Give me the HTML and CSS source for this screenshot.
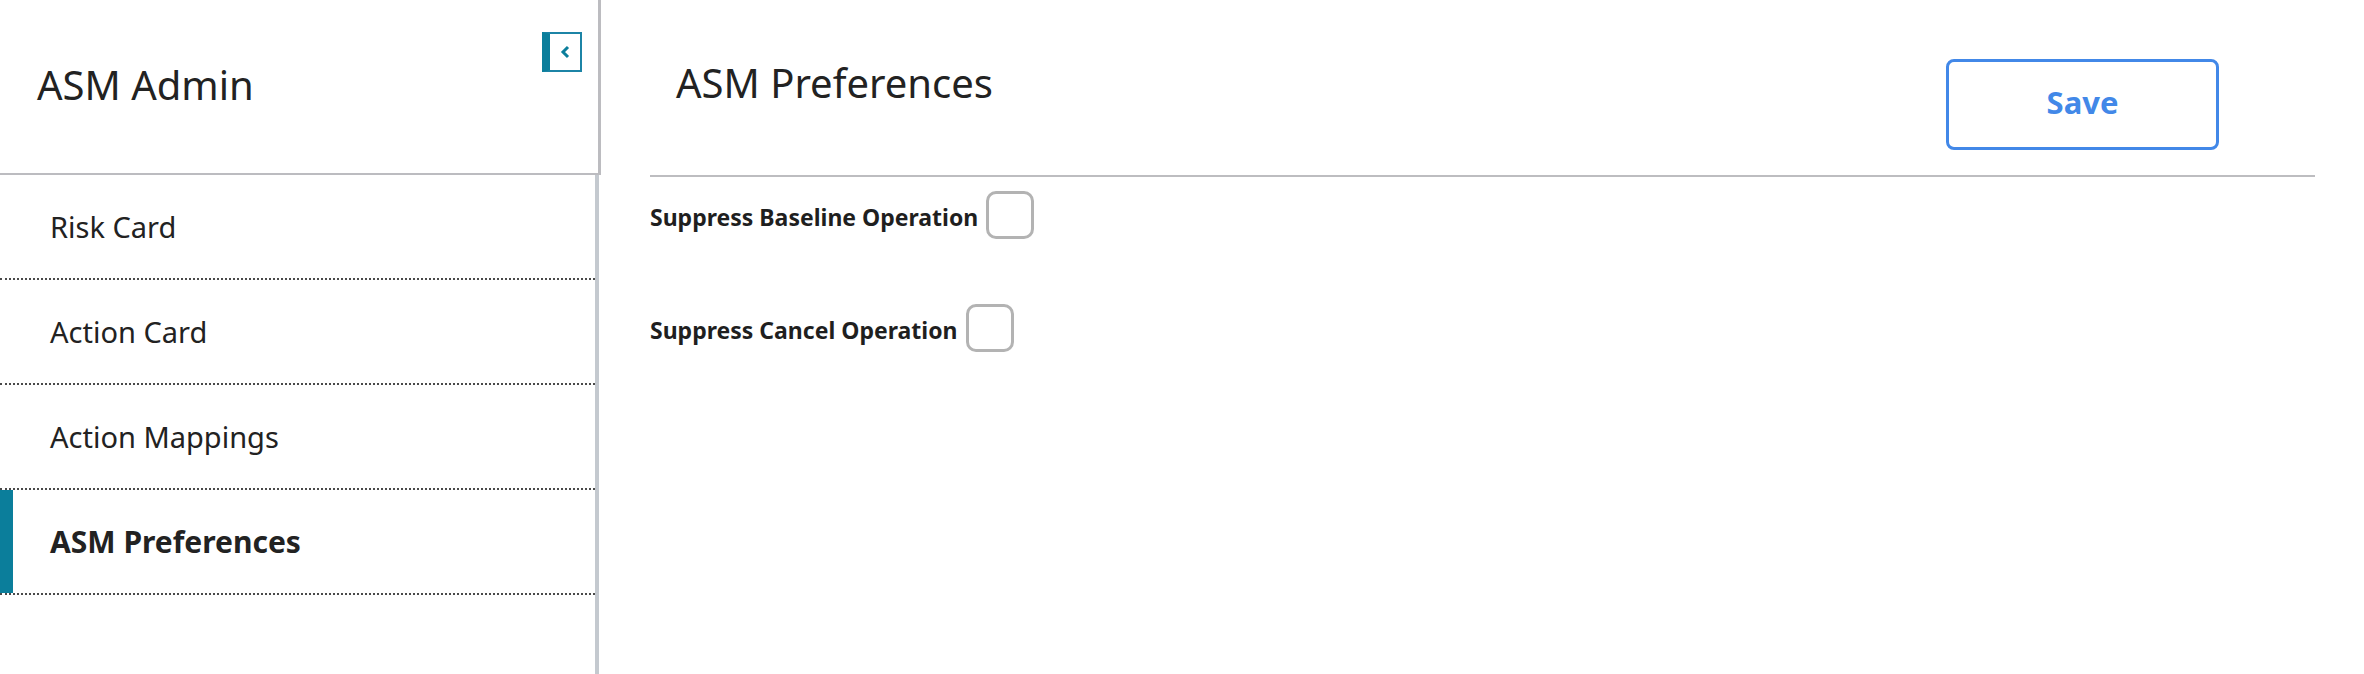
FILE: index.html
```html
<!DOCTYPE html>
<html lang="en">
<head>
<meta charset="utf-8">
<title>ASM Admin</title>
<link rel="stylesheet" href="styles.css">
</head>
<body>
<div class="app">
  <aside class="sidebar">
    <div class="sidebar-header">
      <h1 class="sidebar-title">ASM Admin</h1>
      <button class="collapse-btn" aria-label="Collapse">
        <svg width="11" height="14" viewBox="0 0 11 14"><path d="M8 2 L3 7 L8 12" fill="none" stroke="#0b7e9b" stroke-width="3"/></svg>
      </button>
    </div>
    <nav class="menu">
      <div class="menu-item">Risk Card</div>
      <div class="menu-item">Action Card</div>
      <div class="menu-item">Action Mappings</div>
      <div class="menu-item active">ASM Preferences</div>
    </nav>
  </aside>
  <main class="content">
    <div class="content-header">
      <h2 class="content-title">ASM Preferences</h2>
      <button class="save-btn">Save</button>
    </div>
    <div class="options">
      <label class="option">
        <span class="option-label">Suppress Baseline Operation</span>
        <input type="checkbox" class="checkbox">
      </label>
      <label class="option">
        <span class="option-label">Suppress Cancel Operation</span>
        <input type="checkbox" class="checkbox">
      </label>
    </div>
  </main>
</div>
</body>
</html>
```

FILE: styles.css
```css
html, body {
  margin: 0;
  padding: 0;
  background: #ffffff;
}

body {
  font-family: "Noto Sans", "Open Sans", sans-serif;
  color: #222222;
}

.app {
  display: flex;
  height: 674px;
  overflow: hidden;
}

.sidebar {
  width: 601px;
  flex: none;
  display: flex;
  flex-direction: column;
}

.sidebar-header {
  width: 601px;
  height: 175px;
  box-sizing: border-box;
  display: flex;
  justify-content: space-between;
  align-items: flex-start;
  padding: 32px 16px 0 37px;
  border-bottom: 2px solid #bcbcc0;
  border-right: 3px solid #bcbcc0;
}

.sidebar-title {
  margin: 33px 0 0 0;
  font-size: 40px;
  font-weight: 400;
  line-height: 1;
  color: #222222;
}

.collapse-btn {
  width: 40px;
  height: 40px;
  box-sizing: border-box;
  margin: 0;
  padding: 0 0 0 1px;
  background: #ffffff;
  border: 2px solid #1c84a6;
  border-left: 8px solid #0b7e9b;
  display: flex;
  align-items: center;
  justify-content: center;
  cursor: pointer;
}

.menu {
  flex: 1;
  width: 599px;
  box-sizing: border-box;
  border-right: 4px solid #c4c9cf;
}

.menu-item {
  height: 105px;
  box-sizing: border-box;
  line-height: 103px;
  padding-left: 50px;
  font-size: 29px;
  color: #222222;
  border-bottom: 2px dotted #4a4a4a;
}

.menu-item.active {
  font-weight: 700;
  font-size: 30px;
  box-shadow: inset 13px 0 0 #0b7e9b;
}

.content {
  flex: 1;
  padding: 0 49px;
  min-width: 0;
}

.content-header {
  display: flex;
  justify-content: space-between;
  align-items: flex-start;
  padding: 59px 96px 25px 26px;
  border-bottom: 2px solid #bdbdc0;
}

.content-title {
  margin: 4px 0 0 0;
  font-size: 40px;
  font-weight: 400;
  line-height: 1;
  color: #222222;
}

.save-btn {
  width: 273px;
  height: 91px;
  box-sizing: border-box;
  padding: 0 0 5px 0;
  background: #ffffff;
  border: 3px solid #4288e8;
  border-radius: 8px;
  color: #4288e8;
  font-family: "Noto Sans", "Open Sans", sans-serif;
  font-weight: 700;
  font-size: 31px;
  cursor: pointer;
}

.options {
  display: flex;
  flex-direction: column;
  gap: 65px;
  padding-top: 14px;
}

.option {
  display: flex;
  align-items: flex-end;
  gap: 8px;
}

.option-label {
  font-size: 23px;
  font-weight: 700;
  line-height: 1;
  margin-bottom: 10px;
  color: #1f1f1f;
}

.checkbox {
  appearance: none;
  -webkit-appearance: none;
  margin: 0;
  width: 48px;
  height: 48px;
  box-sizing: border-box;
  border: 3px solid #b3b3b3;
  border-radius: 10px;
  background: #ffffff;
}
```
